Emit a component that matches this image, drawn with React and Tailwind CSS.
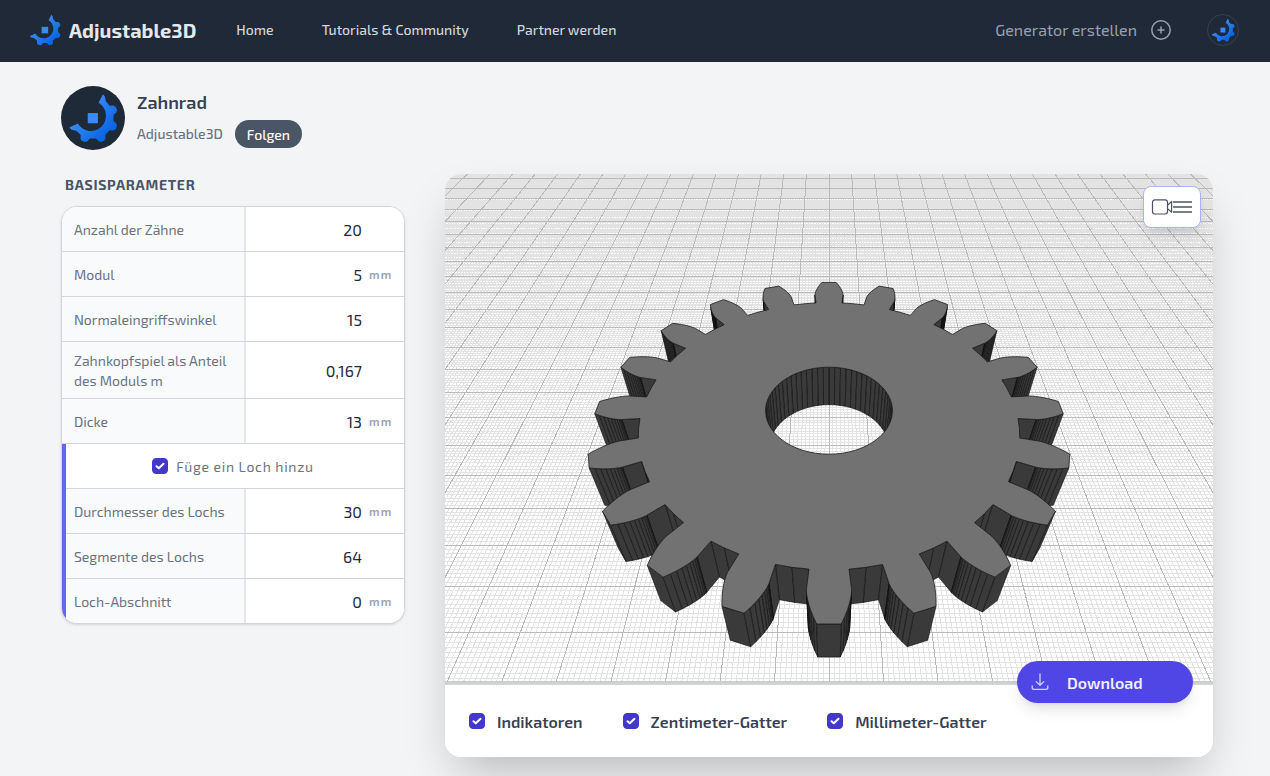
import React, { useState } from 'react';

const polar = (r, deg) => [r * Math.cos((deg * Math.PI) / 180), r * Math.sin((deg * Math.PI) / 180)];
const toPath = (pts) => `M${pts.map(([x, y]) => `${x.toFixed(2)} ${y.toFixed(2)}`).join('L')}Z`;

/* LOGO */
const logoOuter = [
  [30, -72], [36, -65], [39, -51],
  ...[-22.5, 22.5, 67.5, 112.5].flatMap((a) => [
    polar(63, a - 14), polar(73, a - 9), polar(77, a - 4), polar(77, a + 4), polar(73, a + 9), polar(63, a + 14),
  ]),
  [-51, 39], [-65, 36], [-72, 30],
];
const logoPath = `${toPath(logoOuter).slice(0, -1)}L-71 28L-46 17A46 46 0 1 0 17 -46Z`;

const Logo = ({ id, className }) => (
  <svg viewBox="-76 -76 152 152" className={className} aria-hidden="true">
    <defs>
      <linearGradient id={id} gradientUnits="userSpaceOnUse" x1="-45" y1="-45" x2="50" y2="50">
        <stop offset="0" stopColor="#4595fb" />
        <stop offset="1" stopColor="#0763e2" />
      </linearGradient>
    </defs>
    <path d={logoPath} fill={`url(#${id})`} />
    <rect x="-16" y="-15" width="31" height="31" fill="#3b8bf6" />
  </svg>
);

/* SCENE: all lengths in cm, camera tilted by 45 degrees */
const THICKNESS = 1.3;
const TEETH = 20;

const project = ([x, m, z]) => {
  const w = 0.02521 + 0.001154 * (m - z);
  return [384 + x / w, 253.5 + (0.4455 - 0.7071 * (m + z)) / w];
};

const gridLine = (a, b) => {
  const [x1, y1] = project(a);
  const [x2, y2] = project(b);
  return `M${x1.toFixed(2)} ${y1.toFixed(2)}L${x2.toFixed(2)} ${y2.toFixed(2)}`;
};

const buildGrid = () => {
  let cm = '';
  let mm = '';
  for (let i = -180; i <= 180; i++) {
    const line = gridLine([i / 10, -6.5, 0], [i / 10, 18, 0]);
    if (i % 10 === 0) cm += line;
    else mm += line;
  }
  for (let i = -65; i <= 180; i++) {
    const line = gridLine([-18, i / 10, 0], [18, i / 10, 0]);
    if (i % 10 === 0) cm += line;
    else mm += line;
  }
  return { cm, mm };
};

const buildGear = () => {
  const base = 5 * Math.cos(Math.PI / 12);
  const root = 5 - 0.5 * 1.167;
  const tMax = Math.sqrt((5.5 / base) ** 2 - 1);
  const half = Math.PI / (2 * TEETH) + Math.tan(Math.PI / 12) - Math.PI / 12;
  const steps = 10;
  const flank = [[root, half]];
  for (let i = 0; i <= steps; i++) {
    const t = (tMax * i) / steps;
    flank.push([base * Math.sqrt(1 + t * t), half - (t - Math.atan(t))]);
  }
  const pts = [];
  for (let k = 0; k < TEETH; k++) {
    const c = (k * 2 * Math.PI) / TEETH;
    flank.forEach(([r, a]) => pts.push([r, c - a]));
    [...flank].reverse().forEach(([r, a]) => pts.push([r, c + a]));
    pts.push([root, c + Math.PI / TEETH]);
  }
  return pts.map(([r, a]) => [r * Math.sin(a), r * Math.cos(a)]);
};

const buildWalls = (outline) =>
  outline
    .map((p, i) => {
      const q = outline[(i + 1) % outline.length];
      const quad = [[...p, THICKNESS], [...q, THICKNESS], [...q, 0], [...p, 0]].map(project);
      const area = quad.reduce((sum, [x, y], j) => {
        const [nx, ny] = quad[(j + 1) % 4];
        return sum + x * ny - nx * y;
      }, 0);
      return { d: toPath(quad), area, depth: p[1] + q[1] };
    })
    .sort((a, b) => b.depth - a.depth);

const grid = buildGrid();
const gearOutline = buildGear();
const holeOutline = Array.from({ length: 64 }, (_, i) => {
  const a = (i * Math.PI) / 32;
  return [1.5 * Math.sin(a), 1.5 * Math.cos(a)];
});
const outerWalls = buildWalls(gearOutline).filter((w) => w.area < 0);
const holeWalls = buildWalls(holeOutline).filter((w) => w.area > 0);
const topFace = [gearOutline, holeOutline].map((o) => toPath(o.map(([x, m]) => project([x, m, THICKNESS])))).join('');

const GearScene = ({ showCm, showMm }) => (
  <svg viewBox="0 0 768 507" className="block w-full bg-white" role="img" aria-label="Zahnrad">
    <g fill="none" strokeWidth="1" shapeRendering="crispEdges">
      {showMm && <path d={grid.mm} stroke="#e3e3e3" />}
      {showCm && <path d={grid.cm} stroke="#bababa" />}
    </g>
    <g fill="#3a3a3a" stroke="#0c0c0c" strokeWidth="0.6" strokeLinejoin="round">
      {[...holeWalls, ...outerWalls].map((w, i) => <path key={i} d={w.d} />)}
    </g>
    <path d={topFace} fill="#727272" fillRule="evenodd" stroke="#1c1c1c" strokeWidth="0.8" strokeLinejoin="round" />
  </svg>
);

const Checkbox = ({ id, checked, onChange }) => (
  <span className="grid size-4 shrink-0">
    <input
      id={id}
      type="checkbox"
      checked={checked}
      onChange={onChange}
      className="peer col-start-1 row-start-1 size-4 appearance-none rounded border border-gray-300 bg-white checked:border-[#4338ca] checked:bg-[#4338ca]"
    />
    <svg viewBox="0 0 16 16" className="pointer-events-none invisible col-start-1 row-start-1 size-4 peer-checked:visible" fill="none" stroke="#fff" strokeWidth="2" strokeLinecap="round" strokeLinejoin="round">
      <path d="M4.5 8.2L6.8 10.3L11.5 5.7" />
    </svg>
  </span>
);

const ParamRow = ({ id, label, value, unit, nested }) => {
  const [val, setVal] = useState(value);
  return (
    <div className="flex min-h-[45px] last:min-h-11">
      <label
        htmlFor={id}
        className={`flex shrink-0 items-center border-r-2 border-r-gray-200 bg-gray-50 pb-[7px] pr-3 pt-[9px] text-sm text-gray-500 ${nested ? 'w-[180px] pl-2' : 'w-[184px] pl-3'}`}
      >
        {label}
      </label>
      <input
        id={id}
        value={val}
        onChange={(e) => setVal(e.target.value)}
        className="w-0 flex-1 bg-white pt-px text-right text-base text-gray-800 outline-none"
      />
      <span className="flex w-[42px] shrink-0 items-center bg-white pl-[7px] text-xs font-semibold tracking-widest text-gray-400">{unit}</span>
    </div>
  );
};

const params = [
  { id: 'teeth', label: 'Anzahl der Zähne', value: '20' },
  { id: 'module', label: 'Modul', value: '5', unit: 'mm' },
  { id: 'angle', label: 'Normaleingriffswinkel', value: '15' },
  { id: 'clearance', label: 'Zahnkopfspiel als Anteil des Moduls m', value: '0,167' },
  { id: 'thickness', label: 'Dicke', value: '13', unit: 'mm' },
];

const holeParams = [
  { id: 'holeDiameter', label: 'Durchmesser des Lochs', value: '30', unit: 'mm' },
  { id: 'holeSegments', label: 'Segmente des Lochs', value: '64' },
  { id: 'holeSection', label: 'Loch-Abschnitt', value: '0', unit: 'mm' },
];

const Header = () => (
  <header className="flex h-[62px] items-center bg-[#1f2937] pb-0.5 pl-[29px] pr-[31px]">
    <a href="#" className="flex items-center gap-2 text-xl font-bold text-gray-200">
      <Logo id="logoHeader" className="size-8" />
      Adjustable3D
    </a>
    <nav className="ml-10 flex gap-12 text-sm font-medium text-gray-300">
      <a href="#">Home</a>
      <a href="#">Tutorials &amp; Community</a>
      <a href="#">Partner werden</a>
    </nav>
    <a href="#" className="ml-auto flex items-center gap-3 text-base text-gray-400">
      Generator erstellen
      <svg viewBox="0 0 24 24" className="size-6" fill="none" stroke="currentColor" strokeWidth="1.5" strokeLinecap="round">
        <circle cx="12" cy="12" r="9.2" />
        <path d="M12 9v6M9 12h6" />
      </svg>
    </a>
    <button aria-label="Profil" className="ml-[34px] flex size-8 items-center justify-center rounded-full border border-gray-700">
      <Logo id="logoProfile" className="size-6" />
    </button>
  </header>
);

export default function App() {
  const [hasHole, setHasHole] = useState(true);
  const [view, setView] = useState({ indicators: true, cm: true, mm: true });
  const toggle = (key) => setView({ ...view, [key]: !view[key] });

  const options = [
    ['indicators', 'Indikatoren'],
    ['cm', 'Zentimeter-Gatter'],
    ['mm', 'Millimeter-Gatter'],
  ];

  return (
    <div className="min-h-screen bg-gray-100 font-['Exo_2',Roboto,sans-serif]">
      <Header />
      <main className="pb-[18px] pl-[61px] pr-[57px] pt-6">
        {/* TITLE */}
        <div className="flex h-16 items-center gap-3">
          <div className="flex size-16 items-center justify-center rounded-full bg-[#1e2a38]">
            <Logo id="logoAvatar" className="size-[50px]" />
          </div>
          <div className="pt-0.5">
            <h1 className="text-lg font-semibold leading-6 text-gray-700">Zahnrad</h1>
            <div className="mt-1.5 flex items-center gap-3">
              <a href="#" className="text-sm font-medium text-gray-500">Adjustable3D</a>
              <button className="h-7 rounded-full bg-gray-600 px-3 pt-px text-sm font-medium text-white">Folgen</button>
            </div>
          </div>
        </div>

        <div className="mt-6 flex items-start gap-10">
          {/* PARAMETERS */}
          <section className="w-[344px] shrink-0">
            <h2 className="px-1 text-sm font-bold uppercase leading-[22px] tracking-wider text-gray-600">Basisparameter</h2>
            <div className="mt-[10px] divide-y divide-gray-300 overflow-hidden rounded-2xl border border-gray-300 bg-white shadow-sm">
              {params.map((p) => <ParamRow key={p.id} {...p} />)}
              <div className="flex">
                <div className="w-1 shrink-0 bg-[#6366f1]" />
                <div className="flex-1 divide-y divide-gray-300">
                  <div className="flex h-[45px] items-center justify-center gap-2 pr-1">
                    <Checkbox id="hasHole" checked={hasHole} onChange={() => setHasHole(!hasHole)} />
                    <label htmlFor="hasHole" className="pt-px text-sm tracking-wider text-gray-500">Füge ein Loch hinzu</label>
                  </div>
                  {hasHole && holeParams.map((p) => <ParamRow key={p.id} {...p} nested />)}
                </div>
              </div>
            </div>
          </section>

          {/* VIEWER */}
          <section className="relative min-w-0 flex-1 rounded-2xl shadow-2xl">
            <div className="overflow-hidden rounded-t-2xl">
              <GearScene showCm={view.cm} showMm={view.mm} />
            </div>
            <div className="h-1 bg-linear-to-b from-[#c9cacc] to-[#d6d7d9]" />
            <button aria-label="Kamera" className="absolute right-3 top-3 flex h-[42px] w-[58px] items-center justify-center rounded-lg border border-[#a5b4fc] bg-white shadow-lg">
              <svg viewBox="0 0 42 18" className="h-[18px] w-[42px]" fill="none" stroke="#4b5563" strokeWidth="1.2" strokeLinejoin="round">
                <rect x="1.5" y="1.8" width="15" height="14.2" rx="2.4" />
                <path d="M16.5 7.2L20.6 3.5V14.3L16.5 10.6" />
                <path d="M22 4H41M22 9H41M22 14H41" strokeWidth="1.5" />
              </svg>
            </button>
            <div className="relative flex h-[72px] items-center gap-10 rounded-b-2xl bg-white pl-6">
              {options.map(([key, label]) => (
                <div key={key} className="flex items-center gap-3">
                  <Checkbox id={key} checked={view[key]} onChange={() => toggle(key)} />
                  <label htmlFor={key} className="pt-px text-base font-semibold text-gray-700">{label}</label>
                </div>
              ))}
              <button className="absolute -top-6 right-5 flex h-[42px] w-44 items-center rounded-full bg-[#4f46e5] pl-[14px] text-base font-semibold text-[#eef2ff] shadow-lg">
                <svg viewBox="0 0 18 18" className="size-[18px]" fill="none" stroke="#c7d2fe" strokeWidth="1.3" strokeLinecap="round" strokeLinejoin="round">
                  <path d="M9 1v11M5.2 8.6L9 12.2l3.8-3.6M1.2 13v1.4a2 2 0 0 0 2 2h11.6a2 2 0 0 0 2-2V13" />
                </svg>
                <span className="ml-[18px] pt-px">Download</span>
              </button>
            </div>
          </section>
        </div>
      </main>
    </div>
  );
}
